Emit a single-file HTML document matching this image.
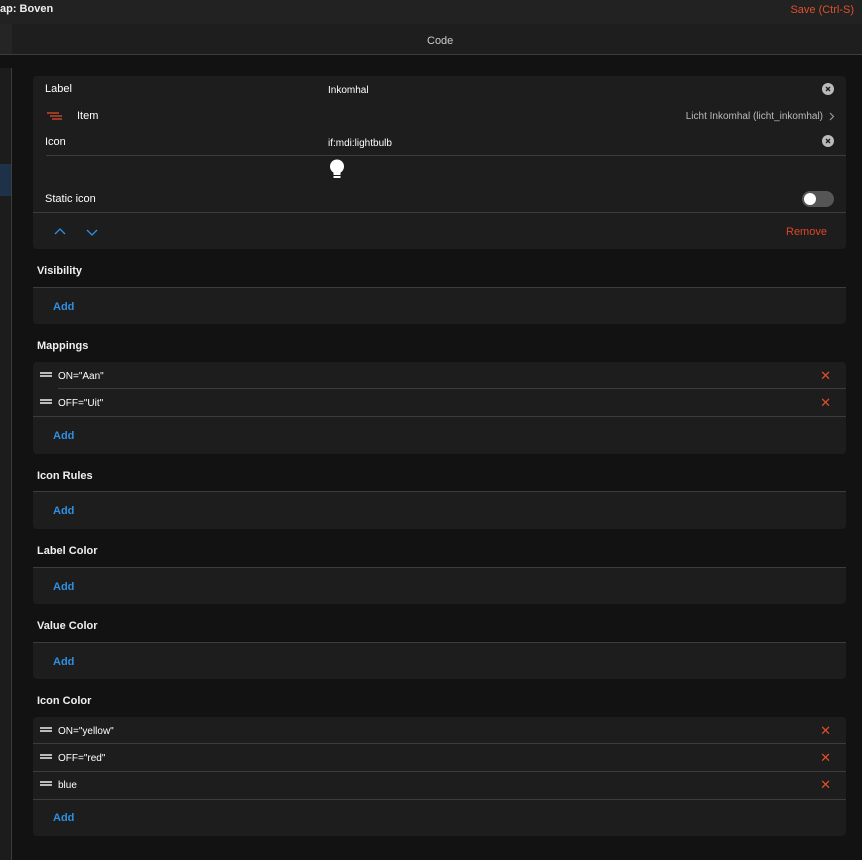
<!DOCTYPE html>
<html><head><meta charset="utf-8"><style>
*{margin:0;padding:0;box-sizing:border-box}
body{width:862px;height:860px;background:#121212;font-family:"Liberation Sans",sans-serif;font-size:11px;color:#fff;position:relative;overflow:hidden}
.a{position:absolute;white-space:nowrap}
.card{position:absolute;left:33px;width:813px;background:#1d1d1d;border-radius:4px}
.card .a,.h,.add,.card .drag{margin-top:1px}
.line{position:absolute;height:1px;background:#3c3c3c}
.h{position:absolute;left:37px;font-weight:bold;font-size:11px;color:#f0f0f0}
.add{position:absolute;left:20px;color:#2f8fe0;font-weight:bold;font-size:11px}
.x{position:absolute;right:15px;color:#e0502a;font-size:13px;line-height:12px}
.drag{position:absolute;left:7px;width:12px;height:5px;border-top:2px solid #bbb;border-bottom:2px solid #bbb}
</style></head><body>
<div class="a" style="left:0;top:0;width:862px;height:24px;background:#222"></div>
<div class="a" style="left:0;top:3px;font-weight:bold;font-size:11px;color:#eee">ap: Boven</div>
<div class="a" style="right:8px;top:4px;color:#e0502a;font-size:11px">Save (Ctrl-S)</div>
<div class="a" style="left:0;top:24px;width:862px;height:31px;background:#1e1e1e;border-bottom:1px solid #3c3c3c"></div>
<div class="a" style="left:0;top:24px;width:12px;height:30px;background:#252525"></div>
<div class="a" style="left:427px;top:35px;color:#ccc;font-size:11px">Code</div>
<div class="a" style="left:0;top:68px;width:12px;height:792px;background:#1c1c1c;border-right:1px solid #3c3c3c"></div>
<div class="a" style="left:0;top:164px;width:11px;height:32px;background:#1d3249"></div>

<div class="card" style="top:76px;height:173px">
 <div class="a" style="left:12px;top:6px">Label</div>
 <div class="a" style="left:295px;top:8px;font-size:10px">Inkomhal</div>
 <svg class="a" style="left:789px;top:6px" width="12" height="12"><circle cx="6" cy="6" r="6" fill="#bbb"/><path d="M4 4l4 4M8 4l-4 4" stroke="#1d1d1d" stroke-width="1.4"/></svg>
 <svg class="a" style="left:14px;top:35px" width="16" height="8"><path d="M0 1h12M3 4h12M5 7h10" stroke="#e0502a" stroke-width="1.2"/></svg>
 <div class="a" style="left:44px;top:33px">Item</div>
 <div class="a" style="right:23px;top:34px;color:#bbb;font-size:10px">Licht Inkomhal (licht_inkomhal)</div>
 <svg class="a" style="left:796px;top:35px" width="6" height="9"><path d="M1 1l3.5 3.5L1 8" stroke="#999" fill="none" stroke-width="1.2"/></svg>
 <div class="a" style="left:12px;top:59px">Icon</div>
 <div class="a" style="left:295px;top:61px;font-size:10px">if:mdi:lightbulb</div>
 <svg class="a" style="left:789px;top:58px" width="12" height="12"><circle cx="6" cy="6" r="6" fill="#bbb"/><path d="M4 4l4 4M8 4l-4 4" stroke="#1d1d1d" stroke-width="1.4"/></svg>
 <div class="line" style="left:13px;top:79px;width:800px"></div>
 <svg class="a" style="left:296px;top:82px" width="16" height="22"><circle cx="8" cy="7.5" r="7" fill="#fff"/><rect x="4.5" y="10" width="7" height="6" fill="#fff"/><rect x="4.5" y="17" width="7" height="2" fill="#fff"/></svg>
 <div class="a" style="left:12px;top:116px">Static icon</div>
 <div class="a" style="left:769px;top:114px;width:32px;height:16px;border-radius:8px;background:#555"></div>
 <div class="a" style="left:771px;top:116px;width:12px;height:12px;border-radius:50%;background:#fff"></div>
 <div class="line" style="left:0;top:136px;width:813px"></div>
 <svg class="a" style="left:21px;top:151px" width="50" height="8"><path d="M1 6l5-5 5 5M33 2l5 5 5-5" stroke="#2f8fe0" fill="none" stroke-width="1.3"/></svg>
 <div class="a" style="left:753px;top:149px;color:#e0442a;font-size:11px">Remove</div>
</div>

<div class="h" style="top:264px">Visibility</div>
<div class="card" style="top:287px;height:37px;border-top:1px solid #3c3c3c;border-radius:0 0 4px 4px"><div class="add" style="top:12px">Add</div></div>

<div class="h" style="top:339px">Mappings</div>
<div class="card" style="top:362px;height:92px">
 <div class="drag" style="top:9px"></div><div class="a" style="left:25px;top:8px;font-size:10px">ON="Aan"</div><div class="x" style="top:8px">✕</div>
 <div class="line" style="left:25px;top:26px;width:788px"></div>
 <div class="drag" style="top:36px"></div><div class="a" style="left:25px;top:35px;font-size:10px">OFF="Uit"</div><div class="x" style="top:35px">✕</div>
 <div class="line" style="left:0;top:54px;width:813px"></div>
 <div class="add" style="top:67px">Add</div>
</div>

<div class="h" style="top:469px">Icon Rules</div>
<div class="card" style="top:491px;height:38px;border-top:1px solid #3c3c3c;border-radius:0 0 4px 4px"><div class="add" style="top:12px">Add</div></div>
<div class="h" style="top:544px">Label Color</div>
<div class="card" style="top:567px;height:37px;border-top:1px solid #3c3c3c;border-radius:0 0 4px 4px"><div class="add" style="top:12px">Add</div></div>
<div class="h" style="top:619px">Value Color</div>
<div class="card" style="top:642px;height:37px;border-top:1px solid #3c3c3c;border-radius:0 0 4px 4px"><div class="add" style="top:12px">Add</div></div>

<div class="h" style="top:694px">Icon Color</div>
<div class="card" style="top:717px;height:119px">
 <div class="drag" style="top:9px"></div><div class="a" style="left:25px;top:8px;font-size:10px">ON="yellow"</div><div class="x" style="top:8px">✕</div>
 <div class="line" style="left:0;top:26px;width:813px"></div>
 <div class="drag" style="top:36px"></div><div class="a" style="left:25px;top:35px;font-size:10px">OFF="red"</div><div class="x" style="top:35px">✕</div>
 <div class="line" style="left:0;top:54px;width:813px"></div>
 <div class="drag" style="top:63px"></div><div class="a" style="left:25px;top:62px;font-size:10px">blue</div><div class="x" style="top:62px">✕</div>
 <div class="line" style="left:0;top:82px;width:813px"></div>
 <div class="add" style="top:94px">Add</div>
</div>
</body></html>
